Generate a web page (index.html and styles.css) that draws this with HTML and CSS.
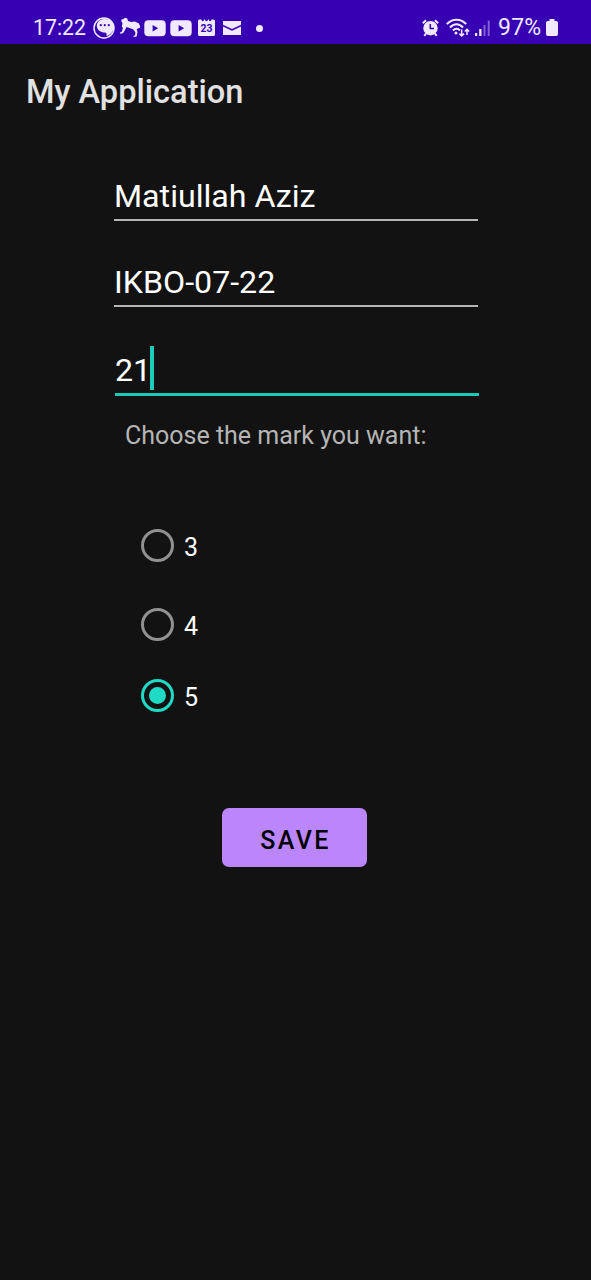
FILE: index.html
```html
<!DOCTYPE html>
<html lang="en">
<head>
<meta charset="utf-8">
<title>My Application</title>
<link rel="stylesheet" href="styles.css">
</head>
<body>
<header class="status">
  <span class="clock">17:22</span>
  <div class="icons">
    <svg class="chat" width="22" height="22" viewBox="0 0 22 22"><circle cx="11" cy="11" r="10" fill="none" stroke="#f1e9ff" stroke-width="1.500"/><path fill="#f1e9ff" d="M12 2c5 0 8.700 2.800 8.700 7.500 0 5-3 8.500-7.200 9.500.3-1.200.1-2.200-.6-3.200C7.500 15.700 3.800 13 3.800 8.800 3.800 4.600 7.500 2 12 2z"/><g fill="#3700b3"><circle cx="7.800" cy="8.200" r="1.100"/><circle cx="11.800" cy="8.200" r="1.100"/><circle cx="15.800" cy="8.200" r="1.100"/></g></svg>
    <svg class="dog" width="21" height="22" viewBox="0 0 21 22"><path fill="#f1e9ff" d="M1.500 2.500 3.500 2 5 .8 7.300 1.500 8 4l3.200.9 3.500-.5 4 1.800 1.600 3.200-.8 1.500-2.800 1.200.8 2.800-.8 4.600-3.200.5v-1.100l1.600-.7.300-2.800-2-3-3.800-1.500-3.200-.8-1.200 2.700-2.200 3.500-2.700.4-.2-1.100 1.800-1 1-3.500-1-1.600.5-3.500-1-1.500z"/></svg>
    <svg class="tube" width="22" height="17" viewBox="0 0 22 17"><rect x=".3" y=".3" width="21.400" height="16" rx="4" fill="#f1e9ff"/><path fill="#3700b3" d="M8.600 5v6.600l5.600-3.300z"/></svg>
    <svg class="tube2" width="22" height="17" viewBox="0 0 22 17"><rect x=".3" y=".3" width="21.400" height="16" rx="4" fill="#f1e9ff"/><path fill="#3700b3" d="M8.600 5v6.600l5.600-3.300z"/></svg>
    <span class="calendar"><svg class="sheet" width="17" height="18" viewBox="0 0 17 18"><path fill="#f1e9ff" d="M1.500.5h2c0 2.300 2.600 2.300 2.600 0h1c0 2.300 2.800 2.300 2.800 0h1c0 2.300 2.600 2.300 2.600 0h2Q17 .5 17 2v13.500q0 1.500-1.500 1.500h-14Q0 17 0 15.500V2Q0 .5 1.500.5z"/></svg><span class="day">23</span></span>
    <svg class="mail" width="18" height="14" viewBox="0 0 18 14"><path fill="#f1e9ff" d="M0 0h18v3.800L9 8 0 3.800zM0 5.600l9 4.200 9-4.200V14H0z"/></svg>
    <span class="dot"></span>
  </div>
  <div class="icons right">
    <svg width="17" height="18" viewBox="0 0 17 18"><circle cx="8.500" cy="9.200" r="7.200" fill="#f1e9ff"/><path d="M.8 4.200 4 1.200M16.200 4.200l-3.200-3M4 14.500 2.300 16.800M13 14.500l1.700 2.300" fill="none" stroke="#f1e9ff" stroke-width="2"/><path d="M8.300 5v4.600H12" fill="none" stroke="#3700b3" stroke-width="1.500"/></svg>
    <svg class="wifi" width="25" height="20" viewBox="0 0 25 20"><g fill="none" stroke="#f1e9ff" stroke-width="2"><path d="M.8 6.200C6 .1 15 .1 20.200 6.200M4 9.500C7.700 5.200 13.300 5.200 17 9.500M7 12.500c2-2.400 5-2.400 7 0"/></g><circle cx="10" cy="15" r="1.500" fill="#f1e9ff"/><path d="M15.700 11.500v6.300m-2.300-2.200 2.300 2.300 2.300-2.300M21 17v-5.500m-2.200 2 2.200-2.200 2.200 2.200" fill="none" stroke="#f1e9ff" stroke-width="1.500"/></svg>
    <svg class="signal" width="16" height="17" viewBox="0 0 16 17"><path fill="#f1e9ff" d="M0 13h2.200v3H0zM4.200 9h2.300v7H4.200z"/><path fill="#8061d0" d="M8.500 5h2v11h-2zM12.700.5h2V16h-2z"/></svg>
    <span class="charge">97%</span>
    <svg class="battery" width="12" height="18" viewBox="0 0 12 18"><path fill="#f1e9ff" d="M3.500 0h5v2h1.700Q12 2 12 3.800v11.400q0 1.800-1.800 1.800H1.800Q0 17 0 15.200V3.800Q0 2 1.800 2h1.700z"/></svg>
  </div>
</header>
<h1 class="title">My Application</h1>
<main class="form">
  <div class="field">Matiullah Aziz</div>
  <div class="field">IKBO-07-22</div>
  <div class="field focused">21<span class="caret"></span></div>
  <p class="prompt">Choose the mark you want:</p>
  <div class="options">
    <div class="option"><span class="radio"></span><span class="mark">3</span></div>
    <div class="option second"><span class="radio"></span><span class="mark">4</span></div>
    <div class="option third"><span class="radio checked"></span><span class="mark">5</span></div>
  </div>
  <button class="save">SAVE</button>
</main>
</body>
</html>
```
FILE: styles.css
```css
* { box-sizing: border-box; }
body {
  margin: 0;
  min-height: 1280px;
  background: #121212;
  color: #fff;
  font-family: Roboto, "Liberation Sans", sans-serif;
}
.status {
  display: flex;
  align-items: center;
  height: 44px;
  padding: 12px 33px 0;
  background: #3700b3;
  color: #f1e9ff;
  font-size: 21.3px;
}
.clock { width: 60px; line-height: 32px; }
.icons { display: flex; align-items: center; height: 32px; }
.icons svg { display: block; flex: none; }
.right { margin-left: auto; }
.dog { margin-left: 5px; }
.tube { margin-left: 3px; }
.tube2 { margin-left: 4px; }
.calendar { display: grid; margin-left: 6px; width: 17px; height: 18px; }
.sheet, .day { grid-area: 1 / 1; }
.day {
  color: #3700b3;
  font-size: 10.5px;
  font-weight: 700;
  line-height: 20px;
  text-align: center;
}
.mail { margin-left: 8px; }
.dot { width: 7px; height: 7px; margin-left: 15px; border-radius: 50%; background: #f1e9ff; }
.wifi { margin-left: 7px; }
.signal { margin-left: 4px; }
.charge { width: 48px; margin-left: 7px; font-size: 23px; letter-spacing: 0.2px; line-height: 32px; white-space: nowrap; }
.title {
  margin: 0;
  padding: 23px 26px 0;
  height: 128px;
  color: #e1e1e1;
  font-size: 32.6px;
  font-weight: 500;
  line-height: 50px;
}
.form { width: 364px; margin-left: 114px; }
.field {
  display: flex;
  height: 49px;
  margin-bottom: 37px;
  border-bottom: 2px solid #b5b5b5;
  font-size: 32.2px;
  line-height: 48px;
}
.focused {
  width: 364px;
  height: 50px;
  margin: 39px 0 0 1px;
  border-bottom: 3px solid #1bcbb7;
}
.caret { width: 4px; height: 44px; margin-left: -1px; background: #1bcbb7; }
.prompt {
  margin: 24px 0 0 11px;
  color: #b5b5b5;
  font-size: 25px;
  line-height: 32px;
}
.options { margin: 76px 0 0 27px; }
.option { display: flex; align-items: center; gap: 10px; height: 34px; font-size: 25px; line-height: 34px; }
.mark { padding-top: 5px; }
.second { margin-top: 45px; }
.third { margin-top: 37px; }
.radio {
  display: grid;
  place-items: center;
  width: 33px;
  height: 33px;
  border: 3px solid #919191;
  border-radius: 50%;
}
.checked { border-color: #1fdac5; }
.checked::after { content: ""; width: 17px; height: 17px; border-radius: 50%; background: #1fdac5; }
.save {
  display: block;
  width: 145px;
  height: 59px;
  margin: 96px 0 0 108px;
  padding: 4px 0 0 2px;
  border: 0;
  border-radius: 7px;
  background: #bb86fc;
  color: #000;
  font: 500 25px/57px Roboto, "Liberation Sans", sans-serif;
  letter-spacing: 2.4px;
}
```
